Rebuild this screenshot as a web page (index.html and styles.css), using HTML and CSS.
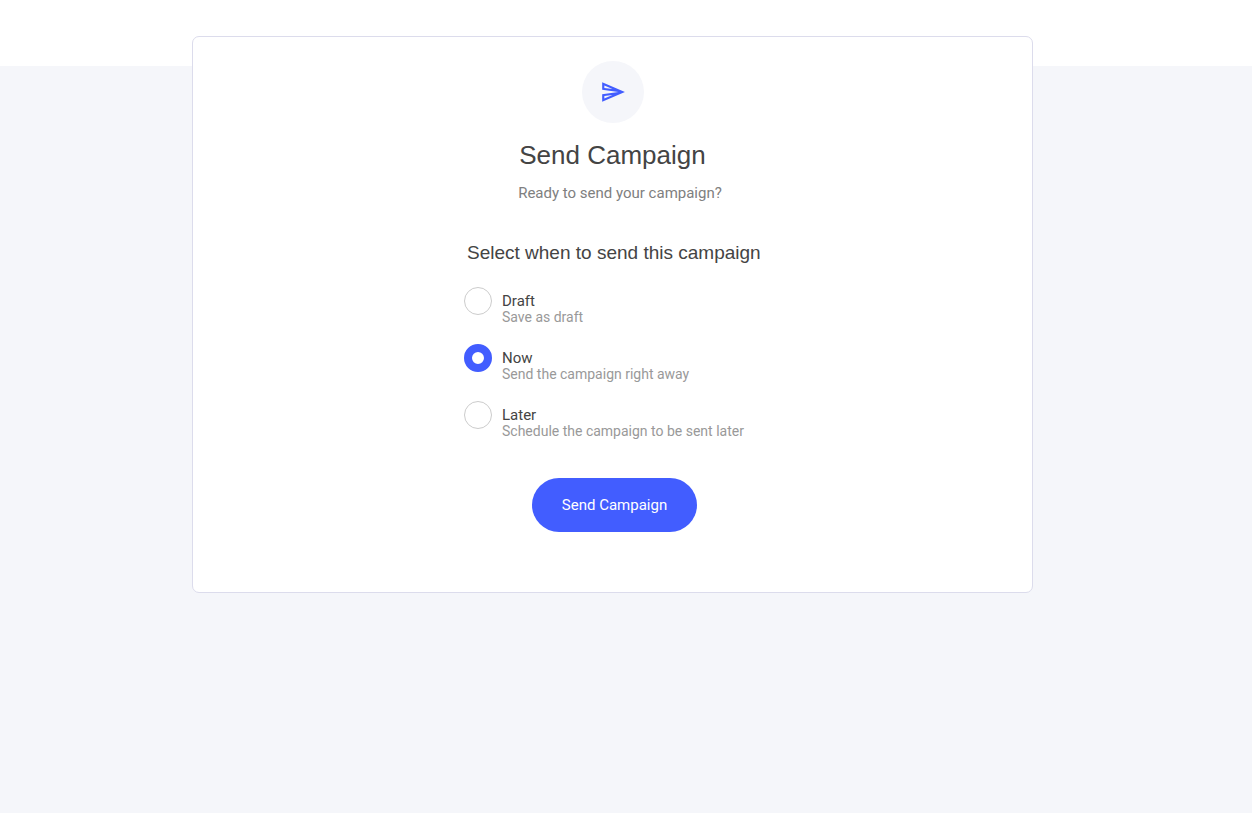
FILE: index.html
```html
<!DOCTYPE html>
<html lang="en">
<head>
    <meta charset="UTF-8">
    <meta name="viewport" content="width=device-width, initial-scale=1.0">
    <title>Send Campaign</title>
    <link rel="stylesheet" href="styles.css">
</head>
<body>
    <main class="page">
        <div class="card">
            <div class="card-header">
                <div class="icon-circle">
                    <svg width="26" height="26" viewBox="0 0 24 24" fill="#425dff" aria-hidden="true">
                        <path d="M4.01 6.03l7.51 3.22-7.51-1 0-2.22m7.5 8.72L4 17.97v-2.22l7.51-1M2.01 3L2 10l15 2-15 2 .01 7L23 12 2.01 3z"/>
                    </svg>
                </div>
                <h1>Send Campaign</h1>
                <p class="subtitle">Ready to send your campaign?</p>
            </div>

            <form class="send-form">
                <fieldset class="options">
                    <legend>Select when to send this campaign</legend>
                    <label class="option">
                        <input type="radio" name="send-time" value="draft">
                        <span class="option-text">
                            <span class="option-title">Draft</span>
                            <span class="option-info">Save as draft</span>
                        </span>
                    </label>
                    <label class="option">
                        <input type="radio" name="send-time" value="now" checked>
                        <span class="option-text">
                            <span class="option-title">Now</span>
                            <span class="option-info">Send the campaign right away</span>
                        </span>
                    </label>
                    <label class="option">
                        <input type="radio" name="send-time" value="later">
                        <span class="option-text">
                            <span class="option-title">Later</span>
                            <span class="option-info">Schedule the campaign to be sent later</span>
                        </span>
                    </label>
                </fieldset>
                <button type="submit" class="btn-send">Send Campaign</button>
            </form>
        </div>
    </main>
</body>
</html>
```

FILE: styles.css
```css
* {
    box-sizing: border-box;
}
body {
    margin: 0;
    min-height: 100vh;
    font-family: Roboto, sans-serif;
    color: #444;
    background: linear-gradient(#fff 66px, #f5f6fa 66px);
}
.page {
    padding: 36px 27px 36px 0;
}
.card {
    max-width: 841px;
    margin: 0 auto;
    padding: 24px 24px 60px;
    background: #fff;
    border: 1px solid #dcdcec;
    border-radius: 7px;
}
.card-header {
    display: flex;
    flex-direction: column;
    align-items: center;
}
.icon-circle {
    display: flex;
    align-items: center;
    justify-content: center;
    width: 62px;
    height: 62px;
    border-radius: 50%;
    background: #f5f6fa;
}
h1 {
    margin: 16px 0 0;
    font-family: "Liberation Sans", Arial, sans-serif;
    font-size: 26px;
    font-weight: 400;
    line-height: 32px;
}
.subtitle {
    margin: 12px 0 0;
    padding-left: 15px;
    font-size: 15px;
    line-height: 20px;
    color: #808080;
}
.send-form {
    display: flex;
    flex-direction: column;
    align-items: center;
    margin-top: 38px;
}
.options {
    min-width: 297px;
    margin: 0;
    padding: 0;
    border: 0;
}
.options legend {
    margin-bottom: 22px;
    padding: 0 0 0 3px;
    font-family: "Liberation Sans", Arial, sans-serif;
    font-size: 19px;
    line-height: 24px;
}
.option {
    display: flex;
    gap: 10px;
    height: 40px;
    margin-bottom: 17px;
    cursor: pointer;
}
.option input {
    appearance: none;
    width: 28px;
    height: 28px;
    margin: 0;
    border: 1px solid #ccc;
    border-radius: 50%;
    background: #fff;
}
.option input:checked {
    border: 8px solid #425dff;
}
.option-text {
    padding-top: 6px;
}
.option-title,
.option-info {
    display: block;
    line-height: 16px;
}
.option-title {
    font-size: 15px;
}
.option-info {
    font-size: 14px;
    color: #999;
}
.btn-send {
    height: 54px;
    margin: 20px 0 0 4px;
    padding: 0 30px;
    border: 0;
    border-radius: 27px;
    font-family: inherit;
    font-size: 15px;
    color: #fff;
    background: #425dff;
    cursor: pointer;
}
```
